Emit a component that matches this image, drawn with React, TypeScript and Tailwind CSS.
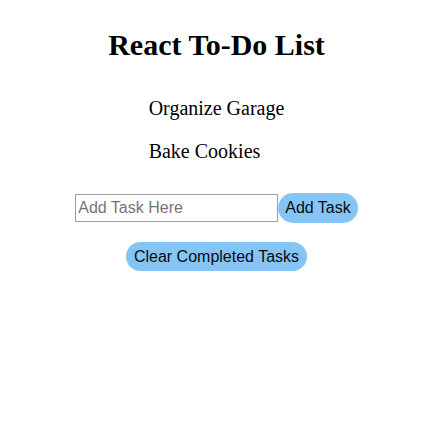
export default function App() {
  const tasks = ["Organize Garage", "Bake Cookies"];
  return (
    <div className="min-h-[423px] bg-white pr-[11px] flex flex-col items-center font-['Liberation_Serif',serif] text-black">
      <h1 className="mt-[27px] text-[30px] leading-[36px] font-bold">React To-Do List</h1>
      <ul className="mt-[33px] flex flex-col gap-[19px] text-[20px] leading-[24px]">
        {tasks.map((t) => (
          <li key={t}>{t}</li>
        ))}
      </ul>
      <div className="mt-[30px] flex items-center font-['Liberation_Sans',sans-serif] text-[16px]">
        <input
          type="text"
          placeholder="Add Task Here"
          className="w-[203px] h-[28px] border border-[#a0a0a0] px-[2px] outline-none placeholder:text-[#757575]"
        />
        <button className="h-[30px] px-[7px] rounded-full bg-[#85c5f5] text-[#0a0a0a]">Add Task</button>
      </div>
      <button className="mt-[19px] h-[29px] px-[8px] rounded-full bg-[#85c5f5] text-[16px] text-[#0a0a0a] font-['Liberation_Sans',sans-serif]">
        Clear Completed Tasks
      </button>
    </div>
  );
}
